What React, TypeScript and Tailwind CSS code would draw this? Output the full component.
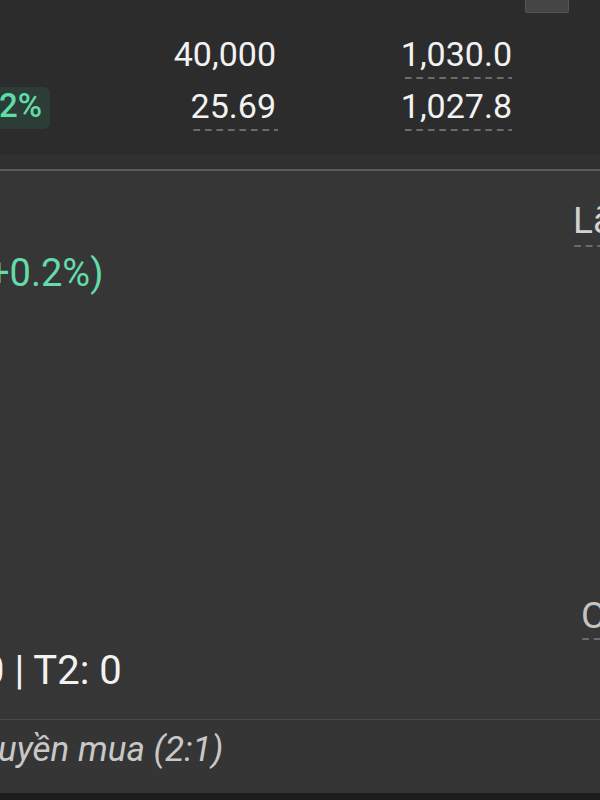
const dash =
  "bg-[linear-gradient(to_right,#6b6b6b_62%,transparent_62%)] bg-[length:11.5px_2px] bg-repeat-x bg-bottom";

function Num({ value, dashed }: { value: string; dashed?: boolean }) {
  return (
    <div className={"text-[34px] leading-[40px] text-[#f2f2f2] pb-[5px] " + (dashed ? dash : "")}>
      {value}
    </div>
  );
}

export default function App() {
  return (
    <div className="w-[600px] h-[800px] overflow-hidden flex flex-col font-['Roboto',sans-serif]">
      {/* quote summary */}
      <div className="h-[155px] bg-[#2c2c2c] flex flex-col">
        <div className="flex justify-end pr-[31px]">
          <div className="w-[44px] h-[13px] bg-[#454545] border border-t-0 border-[#555555] rounded-b-[2px]" />
        </div>
        <div className="mt-[21px] flex items-start">
          <div className="w-[276px] shrink-0 flex justify-end">
            <Num value="40,000" />
          </div>
          <div className="w-[236px] shrink-0 flex justify-end">
            <Num value="1,030.0" dashed />
          </div>
        </div>
        <div className="mt-[7px] flex items-start">
          <div className="w-[276px] shrink-0 flex items-start justify-between">
            <div className="-ml-[12px] mt-px h-[42px] pl-[11px] pr-[8px] rounded-md bg-[#2b3d36] text-[33px] leading-[38px] font-medium text-[#5fdca8] whitespace-nowrap">
              2%
            </div>
            <div className={"text-[34px] leading-[40px] text-[#f2f2f2] pb-[5px] px-[2px] -mr-[2px] " + dash}>
              25.69
            </div>
          </div>
          <div className="w-[236px] shrink-0 flex justify-end">
            <Num value="1,027.8" dashed />
          </div>
        </div>
      </div>
      <div className="h-[14px] bg-[#303030]" />
      <div className="h-[2px] bg-[#5b5b5b]" />

      {/* detail */}
      <div className="flex-1 bg-[#363636] flex overflow-hidden">
        <div className="w-[573px] shrink-0 flex flex-col">
          <div className="mt-[80px] -ml-[12px] text-[38px] leading-[44px] text-[#64dbab] whitespace-nowrap">
            +0.2%)
          </div>
          <div className="mt-[352px] -ml-[18px] text-[40px] leading-[48px] text-[#f2f2f2] whitespace-nowrap">
            0 | T2: 0
          </div>
        </div>
        <div className="w-[80px] shrink-0 flex flex-col whitespace-nowrap">
          <div className={"mt-[30px] text-[37px] leading-[40px] text-[#d2d2d2] pb-[6px] w-[60px] " + dash}>Lãi</div>
          <div className={"mt-[349px] ml-[8px] text-[37px] leading-[40px] text-[#c4c4c4] pb-[4px] w-[60px] " + dash}>O</div>
        </div>
      </div>
      <div className="h-px bg-[#4a4a4a]" />

      {/* corporate action */}
      <div className="h-[73px] bg-[#353535] pt-[9px]">
        <div className="-ml-[2px] text-[35px] leading-[42px] italic text-[#c8c8c8] whitespace-nowrap">
          uyền mua (2:1)
        </div>
      </div>
      <div className="h-[7px] bg-[#1c1c1c]" />
    </div>
  );
}
